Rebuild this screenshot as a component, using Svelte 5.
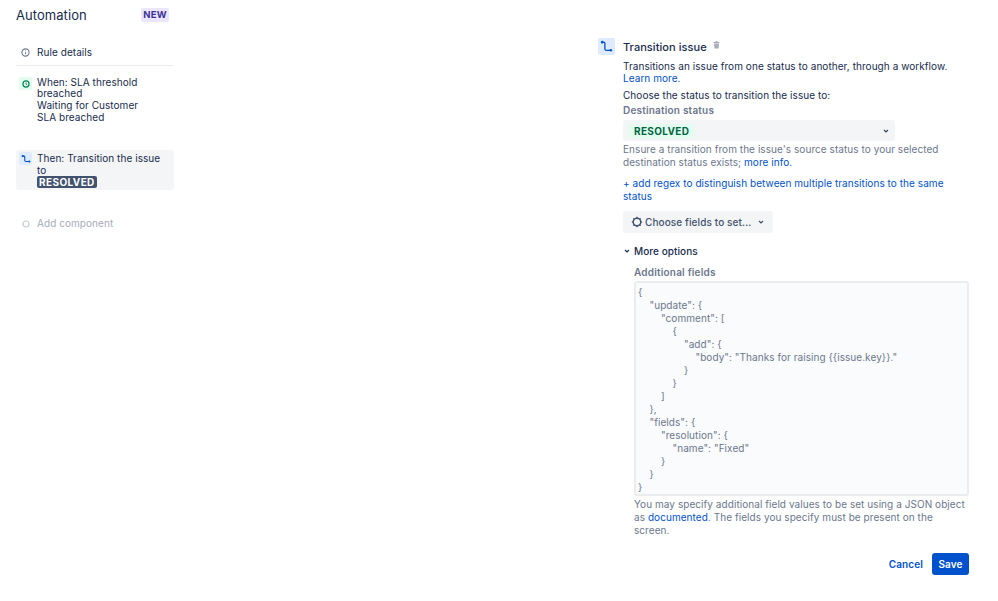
<script>
	const json = `{
    "update": {
        "comment": [
            {
                "add": {
                    "body": "Thanks for raising {{issue.key}}."
                }
            }
        ]
    },
    "fields": {
        "resolution": {
            "name": "Fixed"
        }
    }
}`;
</script>

<div class="page">
	<!-- left rule chain -->
	<aside class="sidebar">
		<div class="sidebar__head">
			<h1>Automation</h1>
			<span class="new">NEW</span>
		</div>

		<div class="step step--details">
			<span class="step__icon">
				<svg width="9" height="9" viewBox="0 0 10 10" fill="none">
					<circle cx="5" cy="5" r="4" stroke="#6b778c" stroke-width="1.2" />
					<path d="M5 3v.6M5 4.6v2.2" stroke="#6b778c" stroke-width="1.1" />
				</svg>
			</span>
			<span>Rule details</span>
		</div>

		<div class="step step--when">
			<span class="step__icon step__icon--green">
				<svg width="8" height="8" viewBox="0 0 10 10" fill="none">
					<circle cx="5" cy="5" r="3.8" stroke="#00875a" stroke-width="1.5" />
					<path d="M5 3v2.2l1.4 1" stroke="#00875a" stroke-width="1.1" />
				</svg>
			</span>
			<div>
				<div class="step__title">When: SLA threshold breached</div>
				<div>Waiting for Customer</div>
				<div>SLA breached</div>
			</div>
		</div>

		<div class="step step--then">
			<span class="step__icon step__icon--blue">
				<svg width="10" height="10" viewBox="0 0 12 12" fill="none">
					<path d="M2 2.5h1.5q1 0 1 1v4q0 1.5 1.5 1.5H10" stroke="#0052cc" stroke-width="1.3" />
					<circle cx="2" cy="2.5" r="1.3" fill="#0052cc" />
					<circle cx="10" cy="9" r="1.3" fill="#0052cc" />
				</svg>
			</span>
			<span>Then: Transition the issue to<br /><span class="lozenge">RESOLVED</span></span>
		</div>

		<div class="step step--add">
			<span class="step__icon">
				<svg width="8" height="8" viewBox="0 0 8 8" fill="none">
					<circle cx="4" cy="4" r="3" stroke="#c1c7d0" stroke-width="1.2" />
				</svg>
			</span>
			<span>Add component</span>
		</div>
	</aside>

	<!-- component config panel -->
	<main class="panel">
		<div class="panel__head">
			<span class="panel__icon">
				<svg width="13" height="13" viewBox="0 0 12 12" fill="none">
					<path d="M2 2h1.5q1 0 1 1v5q0 1.5 1.5 1.5H10" stroke="#0052cc" stroke-width="1.2" />
					<circle cx="2" cy="2" r="1.2" fill="#0052cc" />
					<circle cx="10" cy="9.5" r="1.2" fill="#0052cc" />
				</svg>
			</span>
			<h2>Transition issue</h2>
			<svg class="trash" width="7" height="8" viewBox="0 0 7 8">
				<path d="M0.5 1h6v1h-6zM2.5 0h2v1h-2zM1 2.5h5l-.5 5h-4z" fill="#a5adba" />
			</svg>
		</div>

		<div class="panel__body">
			<p class="intro">
				Transitions an issue from one status to another, through a workflow.
				<a href="#top">Learn more.</a>
			</p>
			<p class="choose">Choose the status to transition the issue to:</p>
			<div class="label">Destination status</div>
			<div class="select">
				<span class="select__value">RESOLVED</span>
				<svg width="8" height="8" viewBox="0 0 8 8" fill="none">
					<path d="M2 3l2 2 2-2" stroke="#344563" stroke-width="1.2" />
				</svg>
			</div>
			<p class="hint">
				Ensure a transition from the issue's source status to your selected destination status
				exists; <a href="#top">more info.</a>
			</p>
			<a class="regex" href="#top">+ add regex to distinguish between multiple transitions to the same status</a>

			<button type="button" class="fields-btn">
				<svg width="12" height="12" viewBox="0 0 12 12" fill="none">
					<circle cx="6" cy="6" r="3.8" stroke="#42526e" stroke-width="1.5" />
					<path d="M6 .8v1.6M6 9.6v1.6M.8 6h1.6M9.6 6h1.6M2.3 2.3l1.1 1.1M8.6 8.6l1.1 1.1M2.3 9.7l1.1-1.1M8.6 3.4l1.1-1.1" stroke="#42526e" stroke-width="1.2" />
				</svg>
				<span>Choose fields to set...</span>
				<svg width="8" height="8" viewBox="0 0 8 8" fill="none">
					<path d="M2 3l2 2 2-2" stroke="#42526e" stroke-width="1.2" />
				</svg>
			</button>

			<div class="more">
				<svg width="8" height="8" viewBox="0 0 8 8" fill="none">
					<path d="M2 3l2 2 2-2" stroke="#172b4d" stroke-width="1.2" />
				</svg>
				<span>More options</span>
			</div>

			<div class="additional">
				<div class="label">Additional fields</div>
				<pre class="json">{json}</pre>
				<p class="hint hint--json">
					You may specify additional field values to be set using a JSON object as
					<a href="#top">documented</a>. The fields you specify must be present on the screen.
				</p>
			</div>

			<div class="actions">
				<button type="button" class="cancel">Cancel</button>
				<button type="button" class="save">Save</button>
			</div>
		</div>
	</main>
</div>

<style>
	:global(body) {
		margin: 0;
		background: #fff;
	}

	.page {
		display: flex;
		justify-content: space-between;
		width: 998px;
		height: 601px;
		box-sizing: border-box;
		padding: 0 29px 0 16px;
		font-family: Inter, "Liberation Sans", sans-serif;
		font-size: 10px;
		letter-spacing: 0.06px;
		line-height: 12px;
		color: #172b4d;
		overflow: hidden;
	}

	a {
		color: #0052cc;
		text-decoration: none;
	}

	p {
		margin: 0;
	}

	/* sidebar */
	.sidebar {
		width: 158px;
	}

	.sidebar__head {
		display: flex;
		align-items: center;
		justify-content: space-between;
		height: 20px;
		margin-top: 5px;
		padding-right: 5px;
	}

	.sidebar__head h1 {
		margin: 0;
		font-size: 13px;
		font-weight: 400;
		line-height: 20px;
		color: #172b4d;
	}

	.new {
		padding: 1px 2px;
		border-radius: 2px;
		background: #eae6ff;
		color: #403294;
		font-size: 9.5px;
		font-weight: 700;
		letter-spacing: 0.3px;
	}

	.step {
		display: flex;
		gap: 5px;
		padding: 3px;
	}

	.step__icon {
		flex: none;
		display: flex;
		align-items: center;
		justify-content: center;
		width: 13px;
		height: 13px;
		border-radius: 2px;
	}

	.step__icon--green {
		background: #e3fcef;
	}

	.step__icon--blue {
		background: #deebff;
	}

	.step__title {
		line-height: 10.5px;
		margin-bottom: 1px;
	}

	.step--details {
		margin-top: 18px;
		padding-bottom: 6px;
		border-bottom: 1px solid #ebecf0;
	}

	.step--when {
		margin-top: 8px;
	}

	.step--then {
		margin-top: 24px;
		border-radius: 3px;
		background: #f4f5f7;
		padding-top: 2px;
		padding-bottom: 2px;
	}

	.step--add {
		margin-top: 24px;
		color: #a5adba;
	}

	.lozenge {
		display: inline-block;
		padding: 0 2px;
		border-radius: 2px;
		background: #42526e;
		color: #fff;
		font-size: 10px;
		font-weight: 700;
		letter-spacing: 0.4px;
	}

	/* panel */
	.panel {
		width: 371px;
		padding-top: 38px;
	}

	.panel__head {
		display: flex;
		align-items: center;
		height: 17px;
	}

	.panel__icon {
		display: flex;
		align-items: center;
		justify-content: center;
		width: 17px;
		height: 17px;
		margin-right: 8px;
		border-radius: 2px;
		background: #deebff;
	}

	.panel__head h2 {
		margin: 0 6px 0 0;
		font-size: 11px;
		font-weight: 500;
		color: #172b4d;
	}

	.trash {
		margin-top: -3px;
	}

	.panel__body {
		padding: 5px 0 0 25px;
	}

	.choose {
		margin-top: 5px;
	}

	.label {
		margin-top: 2px;
		color: #6b778c;
		font-weight: 600;
		letter-spacing: 0.2px;
		line-height: 14px;
	}

	.select {
		display: flex;
		align-items: center;
		justify-content: space-between;
		width: 272px;
		height: 21px;
		box-sizing: border-box;
		margin-top: 3px;
		padding: 0 5px;
		border-radius: 3px;
		background: #f4f5f7;
	}

	.select__value {
		padding: 1px 6px;
		border-radius: 2px;
		background: #e3fcef;
		color: #006644;
		font-size: 10px;
		font-weight: 700;
		letter-spacing: 0.35px;
	}

	.hint {
		margin-top: 2px;
		color: #6b778c;
		line-height: 13px;
	}

	.regex {
		display: block;
		margin-top: 8px;
		line-height: 13px;
	}

	.fields-btn {
		display: flex;
		align-items: center;
		gap: 2px;
		height: 22px;
		margin-top: 8px;
		padding: 0 8px;
		border: 0;
		border-radius: 3px;
		background: #f4f5f7;
		color: #42526e;
		font: inherit;
		font-weight: 500;
		letter-spacing: 0.1px;
	}

	.fields-btn span {
		margin-right: 4px;
	}

	.more {
		display: flex;
		align-items: center;
		gap: 3px;
		margin-top: 12px;
		font-weight: 500;
		color: #172b4d;
	}

	.additional {
		margin-left: 11px;
		margin-top: 8px;
	}

	.additional .label {
		margin-top: 0;
	}

	.json {
		height: 215px;
		box-sizing: border-box;
		margin: 2px 0 0;
		padding: 3px 2px;
		border: 2px solid #ebecf0;
		border-radius: 3px;
		background: #fafbfc;
		color: #6b778c;
		font-family: Inter, "Liberation Sans", sans-serif;
		font-size: 10px;
		letter-spacing: 0.06px;
		line-height: 13px;
		white-space: pre;
	}

	.hint--json {
		margin-top: 2px;
	}

	.actions {
		display: flex;
		justify-content: flex-end;
		align-items: center;
		gap: 9px;
		margin-top: 16px;
	}

	.actions button {
		border: 0;
		border-radius: 3px;
		font: inherit;
		font-weight: 600;
		letter-spacing: 0.1px;
		height: 22px;
	}

	.cancel {
		padding: 0;
		background: none;
		color: #0052cc;
	}

	.save {
		width: 37px;
		padding: 0;
		background: #0052cc;
		color: #fff;
	}
</style>
